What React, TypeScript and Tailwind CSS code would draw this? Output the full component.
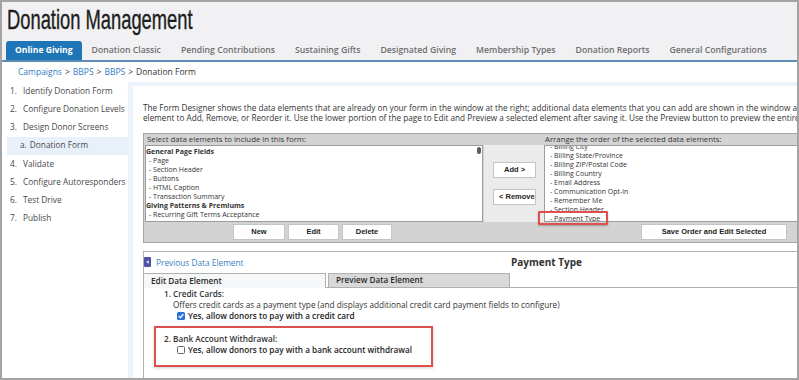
const TABS = [
  'Donation Classic',
  'Pending Contributions',
  'Sustaining Gifts',
  'Designated Giving',
  'Membership Types',
  'Donation Reports',
  'General Configurations',
];

const STEPS = [
  { num: '1.', label: 'Identify Donation Form' },
  { num: '2.', label: 'Configure Donation Levels' },
  { num: '3.', label: 'Design Donor Screens' },
  { num: 'a.', label: 'Donation Form', sub: true },
  { num: '4.', label: 'Validate' },
  { num: '5.', label: 'Configure Autoresponders' },
  { num: '6.', label: 'Test Drive' },
  { num: '7.', label: 'Publish' },
];

const AVAILABLE = [
  { text: 'General Page Fields', group: true },
  { text: '- Page' },
  { text: '- Section Header' },
  { text: '- Buttons' },
  { text: '- HTML Caption' },
  { text: '- Transaction Summary' },
  { text: 'Giving Patterns & Premiums', group: true },
  { text: '- Recurring Gift Terms Acceptance' },
  { text: '- Flexible Sustainer Donation Level' },
];

const SELECTED = [
  '- Billing City',
  '- Billing State/Province',
  '- Billing ZIP/Postal Code',
  '- Billing Country',
  '- Email Address',
  '- Communication Opt-in',
  '- Remember Me',
  '- Section Header',
  '- Payment Type',
];

function GrayButton({ label, className = '' }: { label: string; className?: string }) {
  return (
    <div
      className={`h-[16px] bg-white border border-[#c4c4c4] flex items-center justify-center font-['Liberation_Sans',Arial,sans-serif] font-bold text-[7.5px] text-[#222] whitespace-nowrap ${className}`}
    >
      {label}
    </div>
  );
}

function Checkbox({ checked }: { checked?: boolean }) {
  if (checked) {
    return (
      <svg width="8" height="8" viewBox="0 0 8 8" className="shrink-0">
        <rect x="0" y="0" width="8" height="8" rx="1.5" fill="#2a72d8" />
        <path d="M1.7 4.1 L3.3 5.7 L6.3 2.3" stroke="#fff" strokeWidth="1.3" fill="none" />
      </svg>
    );
  }
  return <span className="w-[8px] h-[8px] shrink-0 rounded-[1.5px] border border-[#666] bg-white" />;
}

export default function App() {
  return (
    <div className="w-[799px] h-[380px] overflow-hidden border-2 border-[#a4a4a4] bg-white font-['Open_Sans',sans-serif] text-[#333] flex flex-col">
      {/* Header */}
      <div className="bg-[#f1f1f3] shrink-0">
        <div className="h-[39px] pl-[5px] pt-[4px]">
          <h1 className="inline-block origin-left scale-x-[0.655] font-['Liberation_Sans',sans-serif] text-[28px] leading-none text-[#1e1e1e] whitespace-nowrap [-webkit-text-stroke:0.4px_#1e1e1e]">
            Donation Management
          </h1>
        </div>
        <div className="flex h-[19px] pl-[4px]">
          <div className="flex items-center px-[9px] bg-[#1f76b7] rounded-t-[3px] text-white font-bold text-[8.6px] whitespace-nowrap">
            Online Giving
          </div>
          {TABS.map((t) => (
            <div key={t} className="flex items-center px-[10px] text-[#6e6e6e] font-semibold text-[8.7px] whitespace-nowrap">
              {t}
            </div>
          ))}
        </div>
      </div>
      <div className="h-[2px] bg-[#5b8db6] shrink-0" />

      {/* Breadcrumb */}
      <div className="h-[20px] shrink-0 flex items-center pl-[16px] text-[8.5px] text-[#333]">
        <span className="text-[#2f7dbf]">Campaigns</span>
        <span className="mx-[3px]">&gt;</span>
        <span className="text-[#2f7dbf]">BBPS</span>
        <span className="mx-[3px]">&gt;</span>
        <span className="text-[#2f7dbf]">BBPS</span>
        <span className="mx-[3px]">&gt;</span>
        <span>Donation Form</span>
      </div>

      {/* Body */}
      <div className="flex flex-1 min-h-0">
        {/* Steps */}
        <div className="w-[126px] shrink-0 text-[8.3px] text-[#484848]">
          {STEPS.map((s) =>
            s.sub ? (
              <div key={s.label} className="h-[18.2px] ml-[5px] pl-[13px] flex items-center bg-[#e8f1fa]">
                <span className="mr-[3px]">{s.num}</span>
                {s.label}
              </div>
            ) : (
              <div key={s.label} className="h-[18.2px] pl-[8px] flex items-center">
                <span className="w-[13px]">{s.num}</span>
                {s.label}
              </div>
            )
          )}
        </div>

        {/* Main */}
        <div className="flex-1 min-w-0 bg-[#ecf3fa] pl-[5px] pt-[4px]">
          <div className="h-full bg-white overflow-hidden pl-[10px] pt-[17px]">
            <div className="text-[8.2px] leading-[10px] text-[#333] whitespace-nowrap">
              <div>
                The Form Designer shows the data elements that are already on your form in the window at the right; additional data elements that you can add are shown in the window at the left. Select an
              </div>
              <div>
                element to Add, Remove, or Reorder it. Use the lower portion of the page to Edit and Preview a selected element after saving it. Use the Preview button to preview the entire form.
              </div>
            </div>

            {/* Form designer */}
            <div className="mt-[10px] w-[700px] h-[110px] border border-[#a5a5a5] bg-[#d3d3d3] flex">
              <div className="w-[340px] shrink-0 flex flex-col">
                <div className="h-[11px] leading-[11px] pl-[3px] text-[7.8px] text-[#333] whitespace-nowrap">
                  Select data elements to include in this form:
                </div>
                <div className="relative h-[77px] mx-[1px] bg-white border border-[#9c9c9c] overflow-hidden pt-[1px] text-[7px] leading-[9px] text-[#333]">
                  {AVAILABLE.map((a) => (
                    <div key={a.text} className={a.group ? 'font-bold' : 'pl-[3px]'}>
                      {a.text}
                    </div>
                  ))}
                  <div className="absolute right-[1px] top-[1px] w-[4px] h-[7px] rounded-[2px] bg-[#5a5a5a]" />
                </div>
                <div className="flex-1 flex items-center pl-[89px] gap-[3px]">
                  <GrayButton label="New" className="w-[52px]" />
                  <GrayButton label="Edit" className="w-[51px]" />
                  <GrayButton label="Delete" className="w-[50px]" />
                </div>
              </div>

              <div className="w-[60px] shrink-0 flex flex-col">
                <div className="h-[11px]" />
                <div className="h-[77px] bg-[#ebebeb] pl-[9px] pt-[17px] flex flex-col gap-[11px]">
                  <GrayButton label="Add >" className="w-[43px] h-[15px]" />
                  <GrayButton label="< Remove" className="w-[43px] h-[15px] justify-start pl-[5px] overflow-visible" />
                </div>
              </div>

              <div className="flex-1 flex flex-col">
                <div className="h-[11px] leading-[11px] pl-[1px] text-[7.8px] text-[#333] whitespace-nowrap">
                  Arrange the order of the selected data elements:
                </div>
                <div className="relative h-[77px] bg-white border border-[#9c9c9c]">
                  <div className="h-full overflow-hidden">
                    <div className="-mt-[4px] pl-[5px] text-[7px] leading-[9px] text-[#333]">
                      {SELECTED.map((s) => (
                        <div key={s}>{s}</div>
                      ))}
                    </div>
                  </div>
                  <div className="absolute left-[-7px] top-[65px] w-[70px] h-[14px] border-2 border-[#dc5050] rounded-[1px] shadow-[0_1px_2px_rgba(0,0,0,0.25)]" />
                </div>
                <div className="flex-1 flex items-center pl-[97px]">
                  <GrayButton label="Save Order and Edit Selected" className="w-[146px]" />
                </div>
              </div>
            </div>

            {/* Lower panel */}
            <div className="mt-[8px] h-full border-t border-l border-[#b3b3b3]">
              <div className="h-[21px] flex items-center">
                <div className="w-[367px] flex items-center">
                  <svg width="7" height="10" viewBox="0 0 7 10" className="shrink-0 -mt-[2px]">
                    <rect x="0" y="0" width="7" height="10" rx="1" fill="#4f53a6" />
                    <path d="M4.6 3.2 L2.4 5 L4.6 6.8 Z" fill="#fff" />
                  </svg>
                  <span className="ml-[5px] text-[8.3px] text-[#3a7fc0] pt-[2px]">Previous Data Element</span>
                </div>
                <div className="text-[10px] font-bold text-[#333]">Payment Type</div>
              </div>

              <div className="flex h-[15px] text-[8.2px] font-semibold text-[#2a2a2a]">
                <div className="w-[182px] bg-[#f6f7f8] border-t border-r border-[#b0b0b0] pl-[7px] flex items-center">
                  Edit Data Element
                </div>
                <div className="w-[2px] border-b border-[#b0b0b0]" />
                <div className="w-[182px] bg-[#d9d9d9] border border-[#b0b0b0] pl-[7px] flex items-center">
                  Preview Data Element
                </div>
                <div className="flex-1 border-b border-[#b0b0b0]" />
              </div>

              <div className="pl-[20px] text-[8.2px] text-[#333]">
                <div className="h-[11px] leading-[11px] font-semibold">1. Credit Cards:</div>
                <div className="h-[11px] leading-[11px] pl-[9px] whitespace-nowrap">
                  Offers credit cards as a payment type (and displays additional credit card payment fields to configure)
                </div>
                <div className="h-[12px] pl-[13px] flex items-center gap-[3px] font-semibold text-[#222] whitespace-nowrap">
                  <Checkbox checked />
                  Yes, allow donors to pay with a credit card
                </div>
              </div>

              <div className="mt-[4px] ml-[10px] w-[279px] h-[41px] border-2 border-[#dc5050] shadow-[0_1px_3px_rgba(0,0,0,0.2)] pl-[8px] pt-[5px] text-[8.2px] text-[#333]">
                <div className="h-[11px] leading-[11px] font-semibold">2. Bank Account Withdrawal:</div>
                <div className="h-[12px] pl-[13px] flex items-center gap-[3px] font-semibold text-[#222] whitespace-nowrap">
                  <Checkbox />
                  Yes, allow donors to pay with a bank account withdrawal
                </div>
              </div>
            </div>
          </div>
        </div>
      </div>
    </div>
  );
}
